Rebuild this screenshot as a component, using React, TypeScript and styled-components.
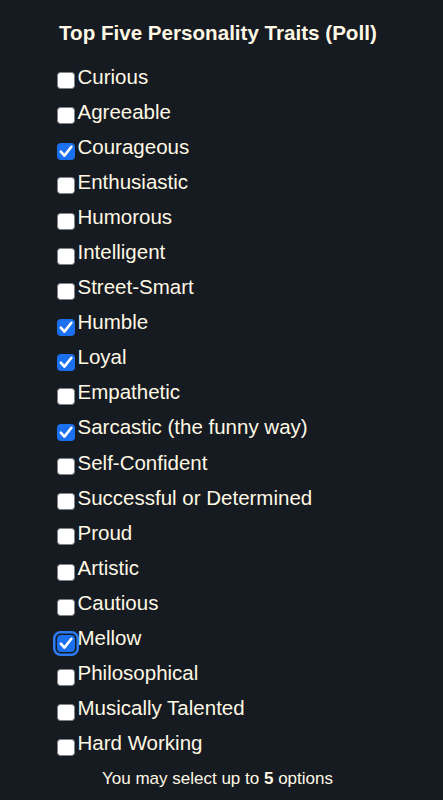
import { useState } from 'react';
import styled, { createGlobalStyle } from 'styled-components';

const traits = [
  'Curious',
  'Agreeable',
  'Courageous',
  'Enthusiastic',
  'Humorous',
  'Intelligent',
  'Street-Smart',
  'Humble',
  'Loyal',
  'Empathetic',
  'Sarcastic (the funny way)',
  'Self-Confident',
  'Successful or Determined',
  'Proud',
  'Artistic',
  'Cautious',
  'Mellow',
  'Philosophical',
  'Musically Talented',
  'Hard Working',
];

const GlobalStyle = createGlobalStyle`
  html, body {
    margin: 0;
    padding: 0;
    background: #161b21;
  }
  body {
    font-family: "Liberation Sans", Arial, Helvetica, sans-serif;
    color: #fff8e4;
  }
`;

export default function App() {
  const [picked, setPicked] = useState<string[]>(['Courageous', 'Humble', 'Loyal', 'Sarcastic (the funny way)', 'Mellow']);
  const [focused, setFocused] = useState('Mellow');

  const toggle = (name: string) => {
    setFocused(name);
    if (picked.includes(name)) {
      setPicked(picked.filter((p) => p !== name));
    } else if (picked.length < 5) {
      setPicked([...picked, name]);
    }
  };

  return (
    <>
      <GlobalStyle />
      <Poll>
        <PollTitle>Top Five Personality Traits (Poll)</PollTitle>
        <OptionList>
          {traits.map((name) => {
            const checked = picked.includes(name);
            return (
              <Option key={name} onClick={() => toggle(name)}>
                <Box $checked={checked} $focused={focused === name} role="checkbox" aria-checked={checked}>
                  {checked && (
                    <svg width="18" height="17" viewBox="0 0 18 17">
                      <path d="M3.8 8.6 L7.4 12.6 L14.4 3.8" fill="none" stroke="#fff" strokeWidth="2.6" strokeLinecap="round" strokeLinejoin="round" />
                    </svg>
                  )}
                </Box>
                {name}
              </Option>
            );
          })}
        </OptionList>
        <Hint>
          You may select up to <b>5</b> options
        </Hint>
      </Poll>
    </>
  );
}

const Poll = styled.div`
  width: 321px;
  margin-left: 57px;
  padding-top: 21px;
`;

const PollTitle = styled.h2`
  margin: 0 0 0 2px;
  font-size: 20.6px;
  font-weight: 700;
  line-height: 23px;
`;

const OptionList = styled.div`
  margin-top: 14.5px;
`;

const Option = styled.label`
  display: block;
  height: 35.1px;
  line-height: 35px;
  font-size: 20.5px;
  white-space: nowrap;
  cursor: pointer;
`;

const Box = styled.span<{ $checked: boolean; $focused: boolean }>`
  display: inline-block;
  box-sizing: border-box;
  width: 18px;
  height: 17px;
  margin-right: 2.5px;
  vertical-align: -5.7px;
  border-radius: 3.5px;
  line-height: 0;
  background: ${(p) => (p.$checked ? '#1b70ef' : '#ffffff')};
  border: 1px solid ${(p) => (p.$checked ? '#1b70ef' : '#80848a')};
  box-shadow: ${(p) => (p.$focused ? '0 0 0 1.5px #161b21, 0 0 0 4px #2c7bf2' : 'none')};

  svg {
    margin: -1px;
  }
`;

const Hint = styled.p`
  margin: 9px 0 0;
  text-align: center;
  font-size: 17px;
  line-height: 20px;

  b {
    font-weight: 700;
  }
`;
